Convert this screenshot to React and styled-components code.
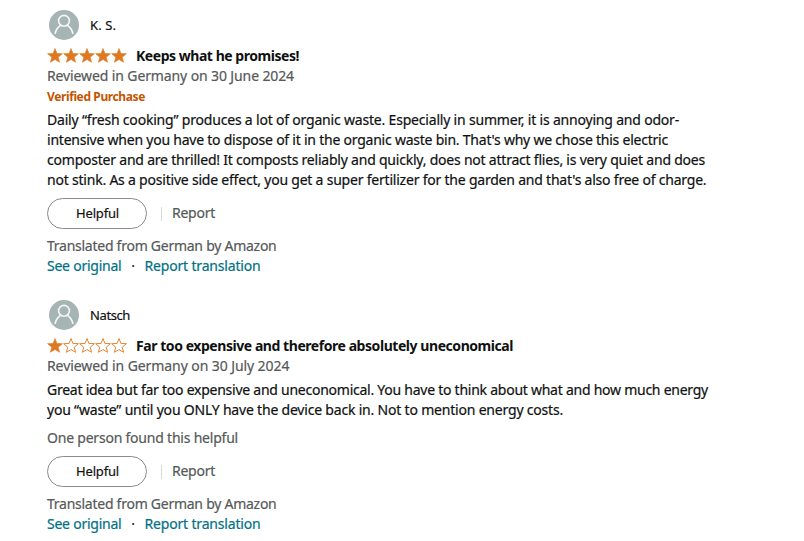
import React from "react";
import styled, { createGlobalStyle } from "styled-components";

const GlobalStyle = createGlobalStyle`
  body {
    margin: 0;
    background: #fff;
    color: #0f1111;
    font: 400 14px/20px "Noto Sans", "Open Sans", sans-serif;
    -webkit-text-stroke: 0.2px currentColor;
  }
`;

const Page = styled.main`
  display: flex;
  flex-direction: column;
  gap: 24px;
  padding: 10px 47px 7px;
`;

const ReviewCard = styled.article`
  display: flex;
  flex-direction: column;
`;

const Profile = styled.div`
  display: flex;
  align-items: center;
  gap: 11px;
  height: 30px;
  padding-left: 2px;
  margin-bottom: 6px;
  font-size: 13px;
`;

const AvatarIcon = styled.svg`
  width: 30px;
  height: 30px;
  flex: none;
`;

const Text = styled.span`
  display: block;
  white-space: nowrap;
  letter-spacing: ${(p) => p.$track || 0}px;
`;

const TitleRow = styled.div`
  display: flex;
  align-items: center;
  height: 20px;
  gap: 9px;
  font-weight: 700;
  -webkit-text-stroke: 0;
`;

const StarStrip = styled.svg`
  width: 80px;
  height: 16px;
  flex: none;
`;

const Muted = styled.div`
  height: 20px;
  color: #565959;
`;

const Badge = styled.div`
  height: 20px;
  line-height: 22px;
  font-size: 12px;
  font-weight: 700;
  color: #c45500;
  -webkit-text-stroke: 0;
`;

const Body = styled.div`
  margin: 4px 0 8px;
`;

const Actions = styled.div`
  display: flex;
  align-items: center;
  height: 31px;
  margin: ${(p) => (p.$spaced ? 8 : 0)}px 0 7px;
  line-height: 18px;
  color: #565959;
`;

const HelpfulButton = styled.button`
  display: flex;
  align-items: flex-start;
  justify-content: center;
  box-sizing: border-box;
  width: 100px;
  height: 31px;
  padding: 5px 0 0 1px;
  border: 1px solid #888c8c;
  border-radius: 16px;
  background: #fff;
  color: #0f1111;
  font: inherit;
  font-size: 13px;
  -webkit-text-stroke: inherit;
`;

const Divider = styled.i`
  width: 1px;
  height: 14px;
  margin: 0 10px 0 14px;
  background: #d5d9d9;
`;

const Report = styled.div`
  padding-bottom: 2px;
`;

const Links = styled.div`
  display: flex;
  height: 20px;
`;

const Link = styled.a`
  color: #007185;
`;

const Dot = styled.span`
  width: 23px;
  text-align: center;
`;

const STAR = "M8 .5 9.9 5.4 15.4 5.7 11.2 9.2 12.6 14.3 8 11.5 3.4 14.3 4.8 9.2.6 5.7 6.1 5.4Z";

function Stars({ count }) {
  return (
    <StarStrip viewBox="0 0 80 16" role="img" aria-label={`${count} out of 5 stars`}>
      {[0, 1, 2, 3, 4].map((i) => (
        <path
          key={i}
          d={STAR}
          transform={`translate(${i * 16} 0)`}
          fill={i < count ? "#de7921" : "#fff"}
          stroke="#de7921"
          strokeLinejoin="round"
          strokeWidth={i < count ? 0.6 : 0.9}
        />
      ))}
    </StarStrip>
  );
}

function Avatar() {
  return (
    <AvatarIcon viewBox="0 0 30 30" aria-hidden="true">
      <circle cx="15" cy="15" r="15" fill="#a6b4b4" />
      <g fill="none" stroke="#f6f8f8" strokeWidth="1.6" strokeLinecap="round">
        <circle cx="15" cy="10.8" r="5.4" />
        <path d="M6.2 23.3C6.9 20 8.7 17.3 11.6 15.4M18.4 15.4C21.3 17.3 23.1 20 23.8 23.3" />
      </g>
    </AvatarIcon>
  );
}

function Review({ name, stars, title, date, verified, body, votes }) {
  return (
    <ReviewCard>
      <Profile>
        <Avatar />
        <Text $track={name.track}>{name.text}</Text>
      </Profile>
      <TitleRow>
        <Stars count={stars} />
        <Text $track={title.track}>{title.text}</Text>
      </TitleRow>
      <Muted><Text $track={date.track}>{date.text}</Text></Muted>
      {verified && <Badge><Text $track={-0.383}>Verified Purchase</Text></Badge>}
      <Body>
        {body.map((line) => (
          <Text key={line.text} $track={line.track}>{line.text}</Text>
        ))}
      </Body>
      {votes && <Muted><Text $track={-0.215}>{votes}</Text></Muted>}
      <Actions $spaced={Boolean(votes)}>
        <HelpfulButton><Text $track={-0.168}>Helpful</Text></HelpfulButton>
        <Divider />
        <Report><Text $track={-0.253}>Report</Text></Report>
      </Actions>
      <Muted><Text $track={-0.259}>Translated from German by Amazon</Text></Muted>
      <Links>
        <Link><Text $track={-0.235}>See original</Text></Link>
        <Dot>·</Dot>
        <Link><Text $track={-0.177}>Report translation</Text></Link>
      </Links>
    </ReviewCard>
  );
}

const reviews = [
  {
    name: { text: "K. S.", track: 0.094 },
    stars: 5,
    title: { text: "Keeps what he promises!", track: -0.46 },
    date: { text: "Reviewed in Germany on 30 June 2024", track: -0.116 },
    verified: true,
    body: [
      { text: "Daily “fresh cooking” produces a lot of organic waste. Especially in summer, it is annoying and odor-", track: -0.192 },
      { text: "intensive when you have to dispose of it in the organic waste bin. That's why we chose this electric", track: -0.229 },
      { text: "composter and are thrilled! It composts reliably and quickly, does not attract flies, is very quiet and does", track: -0.217 },
      { text: "not stink. As a positive side effect, you get a super fertilizer for the garden and that's also free of charge.", track: -0.212 },
    ],
  },
  {
    name: { text: "Natsch", track: -0.395 },
    stars: 1,
    title: { text: "Far too expensive and therefore absolutely uneconomical", track: -0.443 },
    date: { text: "Reviewed in Germany on 30 July 2024", track: -0.085 },
    body: [
      { text: "Great idea but far too expensive and uneconomical. You have to think about what and how much energy", track: -0.251 },
      { text: "you “waste” until you ONLY have the device back in. Not to mention energy costs.", track: -0.195 },
    ],
    votes: "One person found this helpful",
  },
];

export default function App() {
  return (
    <>
      <GlobalStyle />
      <Page>
        {reviews.map((review) => (
          <Review key={review.name.text} {...review} />
        ))}
      </Page>
    </>
  );
}
